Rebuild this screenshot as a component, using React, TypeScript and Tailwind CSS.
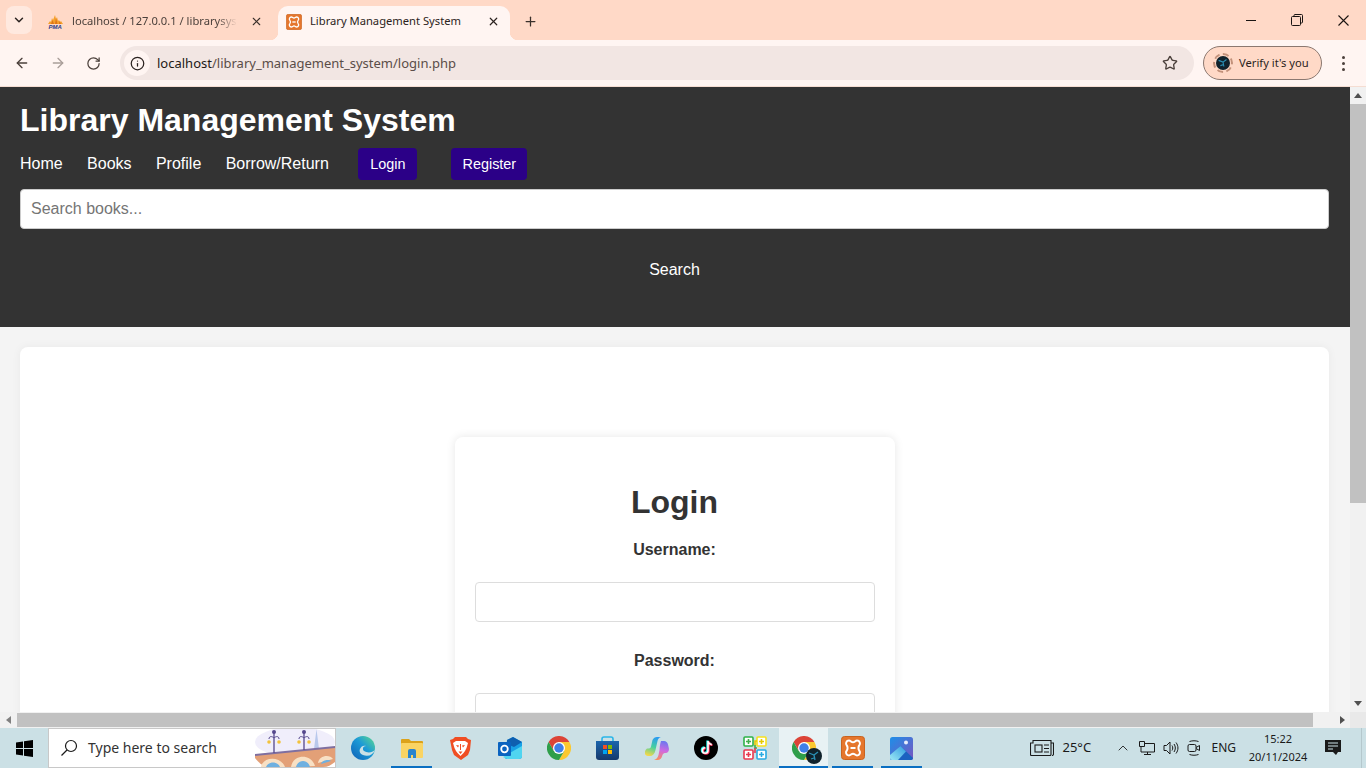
import React from 'react';
import { ArrowLeft, ArrowRight, ChevronDown, ChevronUp, Info, Plus, RotateCw, Star, X } from 'lucide-react';

const uiFont = "font-['Noto_Sans',sans-serif]";
const pageFont = "font-['Liberation_Sans',Arial,sans-serif]";

const XamppIcon = ({ size = 16 }: { size?: number }) => (
  <svg width={size} height={size} viewBox="0 0 24 24">
    <rect x="0.500" y="0.500" width="23" height="23" rx="3" fill="#e5762c" stroke="#c9631f" />
    <path
      d="M8 4.500c1.800 0 2.200 1.800 4 1.800s2.200-1.800 4-1.800c2.800 0 3.800 3.200 2.200 5-1 1.200-1 3.800 0 5 1.600 1.800.6 5-2.200 5-1.800 0-2.200-1.800-4-1.800s-2.200 1.800-4 1.800c-2.800 0-3.800-3.200-2.200-5 1-1.200 1-3.800 0-5-1.600-1.800-.6-5 2.200-5z"
      fill="none"
      stroke="#fff"
      strokeWidth="2"
    />
    <path d="M9.500 12h5" stroke="#fff" strokeWidth="2" />
  </svg>
);

const PmaIcon = () => (
  <svg width="17" height="14" viewBox="0 0 17 14">
    <path d="M1 9 3 6l1 1 1-4 1 2 2-5 1 4 1-2 1 4 1-1 1 2 1-1 2 3z" fill="#f5a02c" />
    <path d="M4 9l1.500-4L7 9zM8 9l1-6 1.500 6zM12 9l.5-3L14 9z" fill="#dd7418" />
    <text x="1.500" y="14" fontSize="6" fontWeight="700" fontStyle="italic" fill="#27408b" fontFamily="Liberation Sans">PMA</text>
  </svg>
);

const ChromeIcon = ({ size = 24 }: { size?: number }) => (
  <svg width={size} height={size} viewBox="0 0 48 48">
    <path d="M3.200 12A24 24 0 0 1 44.800 12H24L13.600 30z" fill="#dc4437" />
    <path d="M44.800 12A24 24 0 0 1 24 48L34.400 30 24 12z" fill="#fbc82f" />
    <path d="M3.200 12A24 24 0 0 0 24 48L34.400 30H13.600z" fill="#2f9e4a" />
    <circle cx="24" cy="24" r="12" fill="#fff" />
    <circle cx="24" cy="24" r="9.500" fill="#3f7fe8" />
  </svg>
);

const Avatar = ({ size = 16 }: { size?: number }) => (
  <svg width={size} height={size} viewBox="0 0 16 16">
    <circle cx="8" cy="8" r="8" fill="#10222c" />
    <path d="M3 5 8 7l4-3M8 7l1 5M5 11l3-1" stroke="#2a8fb5" strokeWidth="1.300" fill="none" />
  </svg>
);

const EdgeIcon = () => (
  <svg width="24" height="24" viewBox="0 0 24 24">
    <defs>
      <linearGradient id="edg" x1="0" y1="1" x2="1" y2="0">
        <stop offset="0" stopColor="#0f5fb5" />
        <stop offset="0.550" stopColor="#1c9ad6" />
        <stop offset="1" stopColor="#5fdc8c" />
      </linearGradient>
    </defs>
    <circle cx="12" cy="12" r="12" fill="url(#edg)" />
    <path d="M24 14c-2 5-7 7-12 5-3-1-4-4-3-6 1-3 4-4 6-3-3 0-4 3-2 5 3 2 8 2 11-1z" fill="#cbe0e5" />
  </svg>
);

const FolderIcon = () => (
  <svg width="22" height="20" viewBox="0 0 22 20">
    <path d="M0 2a1 1 0 0 1 1-1h7l2 2h11a1 1 0 0 1 1 1v3H0z" fill="#dca21a" />
    <rect y="5" width="22" height="15" rx="1" fill="#fad463" />
    <path d="M7 13a2 2 0 0 1 2-2h4a2 2 0 0 1 2 2v7h-3v-3h-2v3H7z" fill="#2a84cc" />
  </svg>
);

const BraveIcon = () => (
  <svg width="21" height="24" viewBox="0 0 21 24">
    <path d="M5 1h11l2 2 3 1-1 10-2 5-7 5-7-5-2-5L0 4l3-1z" fill="#f04e23" />
    <path d="M6 5h9l3 2-1.500 5L15 15l-1.500 2L10.500 20 7.500 17 6 15 4.500 12 3 7z" fill="#fff" />
    <path d="M6 9l3 .5-1 2zM15 9l-3 .5 1 2zM8.500 15.500h4l-2 2.500zM10 8h1v6h-1z" fill="#f04e23" />
  </svg>
);

const OutlookIcon = () => (
  <svg width="24" height="23" viewBox="0 0 24 23">
    <path d="M9 3l6-3 9 5v14a3 3 0 0 1-3 3H9a2 2 0 0 1-2-1z" fill="#18a0e6" />
    <path d="M9 3l6-3 9 5-8 5-7-3z" fill="#0f5fb0" />
    <path d="M5 20l19-11v10a3 3 0 0 1-3 3H9z" fill="#50d5f0" />
    <rect y="5" width="13" height="14" rx="1" fill="#0a63c0" />
    <circle cx="6.500" cy="12" r="3.300" fill="none" stroke="#fff" strokeWidth="1.800" />
  </svg>
);

const StoreIcon = () => (
  <svg width="23" height="24" viewBox="0 0 23 24">
    <defs>
      <linearGradient id="stg" x1="0" y1="0" x2="0" y2="1">
        <stop offset="0" stopColor="#1b65ad" />
        <stop offset="1" stopColor="#16396b" />
      </linearGradient>
    </defs>
    <path d="M6 6V3a2 2 0 0 1 2-2h7a2 2 0 0 1 2 2v3" fill="none" stroke="#2bb5e8" strokeWidth="1.600" />
    <path d="M0 5h23v16a3 3 0 0 1-3 3H3a3 3 0 0 1-3-3z" fill="url(#stg)" />
    <rect x="7" y="9" width="4" height="4" fill="#f25022" />
    <rect x="12" y="9" width="4" height="4" fill="#7fba00" />
    <rect x="7" y="14" width="4" height="4" fill="#00a4ef" />
    <rect x="12" y="14" width="4" height="4" fill="#ffb900" />
  </svg>
);

const CopilotIcon = () => (
  <svg width="24" height="23" viewBox="0 0 24 23">
    <defs>
      <linearGradient id="cpa" x1="0.600" y1="0" x2="0.300" y2="1">
        <stop offset="0" stopColor="#2a9bf0" />
        <stop offset="0.500" stopColor="#45d0a0" />
        <stop offset="1" stopColor="#f4d84a" />
      </linearGradient>
      <linearGradient id="cpb" x1="0.600" y1="0" x2="0.400" y2="1">
        <stop offset="0" stopColor="#6a78f0" />
        <stop offset="0.500" stopColor="#d06ae0" />
        <stop offset="1" stopColor="#f88c60" />
      </linearGradient>
    </defs>
    <path d="M7.500 3C8.500 1 10 0 12 0h4c-2 .5-3 2-3.500 4l-2 9c-.8 4-3 6-5.500 6H3c-2.500 0-3.500-2-3-4.500 .3-1.500 1.500-3 2.500-3 2 0 3 0 3.500-2z" fill="url(#cpa)" />
    <path d="M16 4h3c2 0 3.500 1.500 4 3.500l.8 3.500c.7 3-1 5-3 5-1.500 0-3 .5-3.500 2.500-.5 2.500-2 4.500-5 4.500H9c2.500-.5 3.800-2.500 4.500-5l1-5c.3-1.500 0-5 1.500-9z" fill="url(#cpb)" />
  </svg>
);

const TiktokIcon = () => (
  <svg width="24" height="24" viewBox="0 0 24 24">
    <circle cx="12" cy="12" r="12" fill="#000" />
    <path d="M14 5v9.500a2.800 2.800 0 1 1-2.800-2.800M14 5c.3 2 1.800 3.400 3.800 3.600" fill="none" stroke="#25f4ee" strokeWidth="2" transform="translate(-.7 -.5)" />
    <path d="M14 5v9.500a2.800 2.800 0 1 1-2.800-2.800M14 5c.3 2 1.800 3.400 3.800 3.600" fill="none" stroke="#fe2c55" strokeWidth="2" transform="translate(.7 .5)" />
    <path d="M14 5v9.500a2.800 2.800 0 1 1-2.800-2.800M14 5c.3 2 1.800 3.400 3.800 3.600" fill="none" stroke="#fff" strokeWidth="1.600" />
  </svg>
);

const AppGridIcon = () => (
  <svg width="24" height="24" viewBox="0 0 24 24" fill="#fff" strokeWidth="1.600">
    <rect x="1" y="1" width="9" height="9" rx="1" stroke="#2fb24a" />
    <rect x="14" y="1" width="9" height="9" rx="1" stroke="#f7e11e" />
    <rect x="1" y="14" width="9" height="9" rx="1" stroke="#e8384f" />
    <rect x="14" y="14" width="9" height="9" rx="1" stroke="#29abe2" />
    <path d="M3 5.500h5M5.500 3v5M12 9v3h2" stroke="#3fae49" fill="none" />
    <path d="M16 5.500h5M18.500 3v5M12 9V5h2" stroke="#e5c900" fill="none" />
    <path d="M3 18.500h5M5.500 16v5" stroke="#e8384f" fill="none" />
    <path d="M16 18.500h5M18.500 16v5" stroke="#29abe2" fill="none" />
    <path d="M12 12v5" stroke="#e8384f" />
  </svg>
);

const PhotosIcon = () => (
  <svg width="23" height="23" viewBox="0 0 23 23">
    <defs>
      <linearGradient id="phb" x1="0" y1="0" x2="1" y2="1">
        <stop offset="0" stopColor="#1d8fe8" />
        <stop offset="1" stopColor="#7a55c0" />
      </linearGradient>
      <linearGradient id="phm" x1="0" y1="1" x2="1" y2="0">
        <stop offset="0" stopColor="#9ce8f5" />
        <stop offset="1" stopColor="#2f9be0" />
      </linearGradient>
    </defs>
    <rect width="23" height="23" rx="2.500" fill="url(#phb)" />
    <circle cx="16" cy="5.500" r="2" fill="#e8eefc" />
    <path d="M0 19 10.500 9 23 21a2 2 0 0 1-2 2H2a2 2 0 0 1-2-2z" fill="#1b62c0" />
    <path d="M0 18 10.500 9 16 14.500 8 23H2a2 2 0 0 1-2-2z" fill="url(#phm)" />
  </svg>
);

const BridgeArt = () => (
  <svg width="80" height="38" viewBox="0 0 80 38" className="block">
    <ellipse cx="40" cy="13" rx="40" ry="15" fill="#f0eefb" />
    <path d="M59 20 61.500 0 64 20z" fill="#b8c8ec" />
    <path d="M0 26 80 18v15c-4 3-7 5-12 5H14c-6 0-11-5-14-9z" fill="#e3a077" />
    <path d="M0 25 80 17v2L0 27z" fill="#7f6fa0" />
    <path d="M6 38c2-11 20-11 24 0zM36 38c2-13 20-14 24-1zM63 34c1-8 12-9 15-4z" fill="#f8e0c4" />
    <path d="M11 38c2-6 12-6 14 0zM41 38c2-8 12-8 14 0zM66 35c1-4 8-5 10-3z" fill="#6fb0e0" />
    <path d="M19 24V4M49 21V4" stroke="#54478c" strokeWidth="1.300" />
    <circle cx="19" cy="3" r="2" fill="#54478c" />
    <circle cx="49" cy="3" r="2" fill="#54478c" />
    <path d="M14 10c0-3 3-3 5-1 2-2 5-2 5 1M44 10c0-3 3-3 5-1 2-2 5-2 5 1" stroke="#54478c" fill="none" />
    <circle cx="14" cy="13" r="1.800" fill="#f2c23c" />
    <circle cx="24" cy="13" r="1.800" fill="#f2c23c" />
    <circle cx="44" cy="13" r="1.800" fill="#f2c23c" />
    <circle cx="54" cy="13" r="1.800" fill="#f2c23c" />
  </svg>
);

const taskbarApps = [
  { key: 'edge', icon: <EdgeIcon /> },
  { key: 'folder', icon: <FolderIcon />, open: true },
  { key: 'brave', icon: <BraveIcon /> },
  { key: 'outlook', icon: <OutlookIcon /> },
  { key: 'chrome', icon: <ChromeIcon /> },
  { key: 'store', icon: <StoreIcon /> },
  { key: 'copilot', icon: <CopilotIcon /> },
  { key: 'tiktok', icon: <TiktokIcon /> },
  { key: 'grid', icon: <AppGridIcon /> },
  {
    key: 'chrome2',
    active: true,
    icon: (
      <span className="relative block h-6 w-6">
        <ChromeIcon />
        <span className="absolute -bottom-1 -right-1.5">
          <Avatar size={16} />
        </span>
      </span>
    ),
  },
  { key: 'xampp', icon: <XamppIcon size={24} />, open: true },
  { key: 'photos', icon: <PhotosIcon />, open: true },
];

const BrowserChrome = () => (
  <div className={`${uiFont} shrink-0`}>
    <div className="flex h-10 items-end bg-[#ffd9c7] text-[11.2px]">
      <div className="mb-[6px] ml-[6px] flex h-7 w-[26px] items-center justify-center self-end rounded-lg bg-[#ffe9df] text-[#2b2320]">
        <ChevronDown size={14} strokeWidth={2.500} />
      </div>
      <div className="flex h-8 w-[246px] items-center pl-[15px] pb-[5px] text-[#4b403b]">
        <PmaIcon />
        <span className="ml-2 w-[165px] whitespace-nowrap [mask-image:linear-gradient(to_right,black_88%,transparent)]">localhost / 127.0.0.1 / librarysys</span>
        <X size={13} strokeWidth={2} className="ml-[13px] text-[#3a302b]" />
      </div>
      <div className="relative flex h-[34px] w-[232px] items-center rounded-t-[10px] bg-[#fff5f2] pb-[3px] pl-[8px] text-[#2b2320]">
        <span className="absolute -left-2 bottom-0 h-2 w-2 bg-[radial-gradient(circle_at_0_0,transparent_8px,#fff5f2_8.500px)]" />
        <span className="absolute -right-2 bottom-0 h-2 w-2 bg-[radial-gradient(circle_at_100%_0,transparent_8px,#fff5f2_8.500px)]" />
        <XamppIcon size={16} />
        <span className="ml-2 w-[170px] whitespace-nowrap">Library Management System</span>
        <X size={13} strokeWidth={2.200} className="ml-[7px]" />
      </div>
      <div className="flex h-8 w-10 items-center justify-center pb-[5px] text-[#3a302b]">
        <Plus size={15} strokeWidth={2} />
      </div>
      <div className="flex-1" />
      <div className="flex h-10 items-center self-start text-[#1a1412]">
        <div className="flex w-[46px] justify-center">
          <svg width="10" height="10" viewBox="0 0 10 10" stroke="currentColor"><path d="M0 5.500h10" /></svg>
        </div>
        <div className="flex w-[46px] justify-center">
          <svg width="12" height="12" viewBox="0 0 12 12" fill="none" stroke="currentColor">
            <rect x="0.500" y="2.500" width="9" height="9" rx="1" />
            <path d="M3 2.500V1.500a1 1 0 0 1 1-1h6.500a1 1 0 0 1 1 1V8a1 1 0 0 1-1 1h-1" />
          </svg>
        </div>
        <div className="flex w-[46px] justify-center">
          <svg width="11" height="11" viewBox="0 0 11 11" stroke="currentColor" strokeWidth="1.100"><path d="M.5.500l10 10M10.500.500l-10 10" /></svg>
        </div>
      </div>
    </div>
    <div className="flex h-[47px] items-center border-b border-[#f5ddd2] bg-[#fff5f2] text-[#4b403b]">
      <div className="flex w-[120px] items-center pl-[14px]">
        <ArrowLeft size={16} strokeWidth={2} />
        <ArrowRight size={16} strokeWidth={2} className="ml-5 text-[#a99e99]" />
        <RotateCw size={15} strokeWidth={2} className="ml-[20px]" />
      </div>
      <div className="flex h-[34px] w-[1074px] items-center rounded-full bg-[#f2e6e3] pl-[4px]">
        <div className="flex h-[26px] w-[26px] items-center justify-center rounded-full bg-[#fff5f2] text-[#2b2320]">
          <Info size={15} strokeWidth={2} />
        </div>
        <span className="ml-[7px] pt-[2px] text-[13px] text-[#5a4d48]"><span className="text-[#231a17]">localhost</span>/library_management_system/login.php</span>
        <div className="flex-1" />
        <Star size={16} strokeWidth={2} className="mr-[16px] text-[#4b403b]" />
      </div>
      <div className="ml-[9px] flex h-[34px] w-[119px] items-center rounded-full border border-[#8b7870] bg-[#ffd9c7] pl-[9px] text-[11.2px] text-[#2b2320]">
        <span className="relative flex h-[20px] w-[20px] items-center justify-center rounded-full border-2 border-dashed border-[#c2917a]">
          <Avatar size={14} />
        </span>
        <span className="ml-[6px] whitespace-nowrap">Verify it's you</span>
      </div>
      <div className="ml-[20px] flex flex-col gap-[3px]">
        <span className="h-[3px] w-[3px] rounded-full bg-[#4b403b]" />
        <span className="h-[3px] w-[3px] rounded-full bg-[#4b403b]" />
        <span className="h-[3px] w-[3px] rounded-full bg-[#4b403b]" />
      </div>
    </div>
  </div>
);

const Page = () => (
  <div className={`${pageFont} h-[625px] flex-1 overflow-hidden bg-[#f4f4f4] text-[#333]`}>
    <header className="h-[240px] bg-[#333] pl-5 pr-[21px] pt-[15px] text-white">
      <h1 className="text-[32px] font-bold leading-[37px]">Library Management System</h1>
      <nav className="mt-[9px] flex h-8 items-center text-base">
        <a className="mr-[24.400px]">Home</a>
        <a className="mr-[24.400px]">Books</a>
        <a className="mr-[24.400px]">Profile</a>
        <a>Borrow/Return</a>
        <a className="ml-[29px] flex h-8 w-[59px] items-center justify-center rounded bg-[#2b0087] pl-[1px] pt-[2px] text-[14.400px]">Login</a>
        <a className="ml-[34px] flex h-8 w-[76px] items-center justify-center rounded bg-[#2b0087] pl-[1px] pt-[2px] text-[14.400px]">Register</a>
      </nav>
      <input
        placeholder="Search books..."
        className="mt-[9px] block h-10 w-full rounded border border-[#ccc] bg-white px-[10px] text-base text-[#333] placeholder:text-[#757575]"
      />
      <div className="mt-[31px] text-center text-base leading-[20px]">Search</div>
    </header>
    <main className="py-5 pl-5 pr-[21px]">
      <div className="rounded-lg bg-white px-5 pt-[90px] shadow-[0_0_10px_rgba(0,0,0,0.05)]">
        <div className="mx-auto w-[440px] rounded-lg bg-white p-5 text-center shadow-[0_0_10px_rgba(0,0,0,0.1)]">
          <h2 className="mt-[27px] text-[32px] font-bold leading-[37px]">Login</h2>
          <label className="mt-[20px] block text-base font-bold leading-[18px]">Username:</label>
          <input className="mt-[23px] block h-10 w-full rounded border border-[#ddd]" />
          <label className="mt-[30px] block text-base font-bold leading-[18px]">Password:</label>
          <input className="mt-[23px] block h-10 w-full rounded border border-[#ddd]" />
        </div>
      </div>
    </main>
  </div>
);

const Taskbar = () => (
  <div className={`${uiFont} flex h-10 shrink-0 items-center bg-[#cbe0e5] text-[#1a1a1a]`}>
    <div className="flex w-[48px] justify-center">
      <svg width="17" height="17" viewBox="0 0 17 17" fill="#000">
        <path d="M0 2.400 7 1.400V8H0zM8 1.300 17 0v8H8zM0 9h7v6.600L0 14.600zM8 9h9v8l-9-1.300z" />
      </svg>
    </div>
    <div className="flex h-10 w-[288px] items-center overflow-hidden border border-[#c8c8c8] bg-white pl-[11px]">
      <svg width="18" height="18" viewBox="0 0 18 18" fill="none" stroke="#1a1a1a" strokeWidth="1.200">
        <circle cx="11" cy="7" r="5.500" />
        <path d="M7 11 1.500 16.500" />
      </svg>
      <span className="ml-[10px] whitespace-nowrap text-sm text-[#333]">Type here to search</span>
      <div className="flex-1" />
      <BridgeArt />
    </div>
    <div className="ml-[2px] flex h-10">
      {taskbarApps.map((app) => (
        <div
          key={app.key}
          className={`relative flex h-10 w-[49px] items-center justify-center ${app.active ? 'bg-[#e8f2f4]' : ''}`}
        >
          {app.icon}
          {app.active && <span className="absolute inset-x-0 bottom-0 h-[2px] bg-[#0a6fc2]" />}
          {app.open && <span className="absolute inset-x-1 bottom-0 h-[2px] bg-[#0a6fc2]" />}
        </div>
      ))}
    </div>
    <div className="flex-1" />
    <div className="flex h-10 items-center text-xs">
      <svg width="24" height="16" viewBox="0 0 24 16" fill="none" stroke="#1a1a1a" strokeWidth="1.100">
        <path d="M3 .5h18v14a1 1 0 0 1-1 1H1.500a1 1 0 0 1-1-1V3H3zM21 3h2.500v11a1.500 1.500 0 0 1-1.500 1.500" />
        <rect x="5" y="5" width="7" height="7" />
        <path d="M14 5h5M14 8.500h5M14 12h5" />
      </svg>
      <span className="ml-[8px] w-[53px] text-[13px]">25°C</span>
      <ChevronUp size={16} strokeWidth={1.300} />
      <svg className="ml-[8px]" width="16" height="16" viewBox="0 0 16 16" fill="none" stroke="#1a1a1a">
        <path d="M.5 1.500h5v5h-5zM6 3.500h9.500v8.500H2V7M8.500 12v2.500M5 14.500h7" />
      </svg>
      <svg className="ml-[8px]" width="16" height="16" viewBox="0 0 16 16" fill="none" stroke="#1a1a1a">
        <path d="M1 5.500h2.500L7 2v12L3.500 10.500H1zM9 5.500c1 1.500 1 3.500 0 5M11 4c1.800 2.500 1.800 5.500 0 8M13 2.500c2.600 3.500 2.600 7.500 0 11" />
      </svg>
      <svg className="ml-[8px]" width="14" height="16" viewBox="0 0 14 16" fill="none" stroke="#1a1a1a">
        <path d="M2.500 1.500c3-1 6-1 9 0M2.500 14.500c3 1 6 1 9 0" />
        <rect x="1" y="4.500" width="8" height="7" rx="1.500" />
        <path d="M9 7.500 12.500 5.500v5L9 8.500" />
      </svg>
      <span className="ml-[10px] text-xs">ENG</span>
      <div className="ml-[12px] flex w-[60px] flex-col items-center text-[11px] leading-[18px]">
        <span>15:22</span>
        <span>20/11/2024</span>
      </div>
      <svg className="ml-[17px] mr-[20px]" width="16" height="16" viewBox="0 0 16 16">
        <path d="M0 0h16v12h-3l-2 3-3-3H0z" fill="#1a1a1a" />
        <path d="M3 3h10M3 6h10M3 9h5" stroke="#cbe0e5" />
      </svg>
      <span className="h-10 w-px bg-[#b5c8cd]" />
      <span className="w-1" />
    </div>
  </div>
);

const App: React.FC = () => {
  return (
    <div className="flex h-[768px] w-[1366px] flex-col overflow-hidden">
      <BrowserChrome />
      <div className="flex h-[625px] shrink-0">
        <Page />
        {/* vertical scrollbar */}
        <div className="flex w-4 flex-col items-center bg-[#f1f1f1]">
          <div className="flex h-[17px] w-full items-center justify-center">
            <span className="h-0 w-0 border-x-[4px] border-b-[5px] border-x-transparent border-b-[#505050]" />
          </div>
          <div className="h-[399px] w-full bg-[#c1c1c1]" />
          <div className="flex-1" />
          <div className="flex h-[17px] w-full items-center justify-center">
            <span className="h-0 w-0 border-x-[4px] border-t-[5px] border-x-transparent border-t-[#505050]" />
          </div>
        </div>
      </div>
      {/* horizontal scrollbar */}
      <div className="flex h-4 shrink-0 items-center bg-[#f1f1f1]">
        <div className="flex w-[17px] justify-center">
          <span className="h-0 w-0 border-y-[4px] border-r-[5px] border-y-transparent border-r-[#808080]" />
        </div>
        <div className="h-[14px] w-[1296px] bg-[#c1c1c1]" />
        <div className="flex w-[37px] justify-end pr-[5px]">
          <span className="h-0 w-0 border-y-[4px] border-l-[5px] border-y-transparent border-l-[#505050]" />
        </div>
        <div className="h-4 flex-1 bg-[#e9e9e9]" />
      </div>
      <Taskbar />
    </div>
  );
};

export default App;
